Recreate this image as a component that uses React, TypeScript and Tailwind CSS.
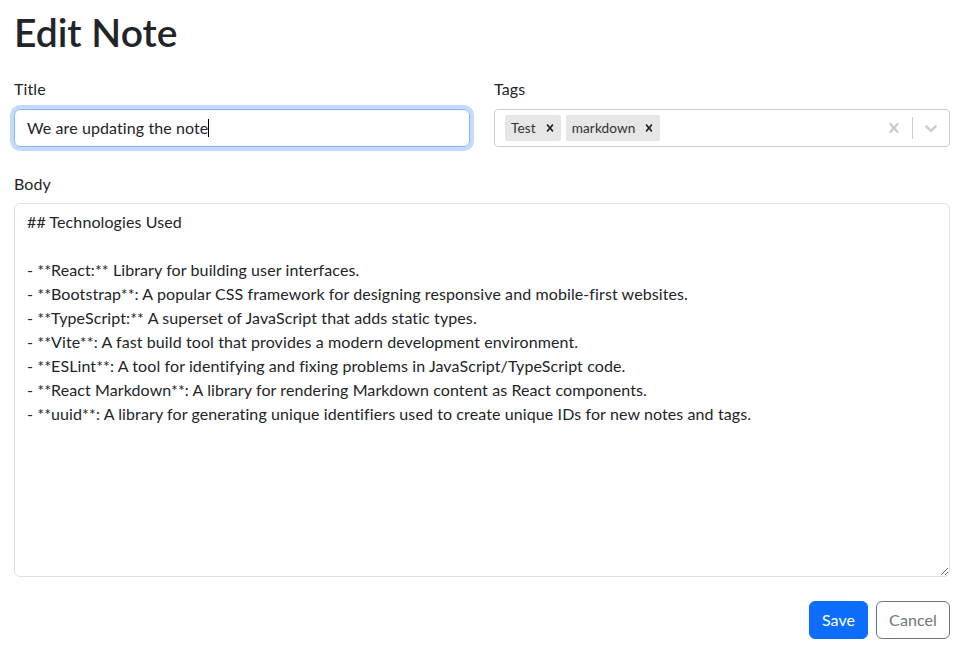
const BODY = `## Technologies Used

- **React:** Library for building user interfaces.
- **Bootstrap**: A popular CSS framework for designing responsive and mobile-first websites.
- **TypeScript:** A superset of JavaScript that adds static types.
- **Vite**: A fast build tool that provides a modern development environment.
- **ESLint**: A tool for identifying and fixing problems in JavaScript/TypeScript code.
- **React Markdown**: A library for rendering Markdown content as React components.
- **uuid**: A library for generating unique identifiers used to create unique IDs for new notes and tags.`

const TAGS = ['Test', 'markdown']

const CROSS =
  'M14.348 14.849c-0.469 0.469-1.229 0.469-1.697 0l-2.651-3.030-2.651 3.029c-0.469 0.469-1.229 0.469-1.697 0-0.469-0.469-0.469-1.229 0-1.697l2.758-3.15-2.759-3.152c-0.469-0.469-0.469-1.228 0-1.697s1.228-0.469 1.697 0l2.652 3.031 2.651-3.031c0.469-0.469 1.228-0.469 1.697 0s0.469 1.229 0 1.697l-2.758 3.152 2.758 3.15c0.469 0.469 0.469 1.229 0 1.698z'

function Chip({ label }: { label: string }) {
  return (
    <div className="flex items-center h-[26px] bg-[#e6e6e6] rounded-[2px] text-[13.6px] text-[#333]">
      <span className="pl-[6px] pr-[3px]">{label}</span>
      <span className="px-[4px] flex items-center">
        <svg viewBox="0 0 20 20" className="w-[14px] h-[14px]" fill="#222">
          <path d={CROSS} />
        </svg>
      </span>
    </div>
  )
}

export default function App() {
  return (
    <div className="pl-[14px] pr-[20px] text-[#212529] font-['Lato',sans-serif] text-base tracking-[0.1px] bg-white min-h-[658px]">
      <h1 className="text-[39px] leading-[48px] font-semibold tracking-normal pt-[8px] mb-[21px]">Edit Note</h1>

      <div className="grid grid-cols-2 gap-x-6">
        <div>
          <div className="leading-6 mb-2">Title</div>
          <div className="h-[38px] border border-[#86b7fe] rounded-[6px] shadow-[0_0_0_4px_rgba(13,110,253,0.25)] px-3 flex items-center">
            <span>We are updating the note</span>
            <span className="w-px h-[18px] bg-black" />
          </div>
        </div>
        <div>
          <div className="leading-6 mb-2">Tags</div>
          <div className="h-[38px] border border-[#ccc] rounded-[4px] flex items-center">
            <div className="flex-1 flex items-center gap-[5px] pl-[10px]">
              {TAGS.map(t => <Chip key={t} label={t} />)}
            </div>
            <div className="flex items-center h-full">
              <div className="px-2 flex items-center">
                <svg viewBox="0 0 20 20" className="w-5 h-5" fill="#ccc">
                  <path d={CROSS} />
                </svg>
              </div>
              <span className="w-px h-[22px] bg-[#ccc]" />
              <div className="px-2 flex items-center">
                <svg viewBox="0 0 20 20" className="w-5 h-5" fill="#ccc">
                  <path d="M4.516 7.548c0.436-0.446 1.043-0.481 1.576 0l3.908 3.747 3.908-3.747c0.533-0.481 1.141-0.446 1.574 0 0.436 0.445 0.408 1.197 0 1.615-0.406 0.418-4.695 4.502-4.695 4.502-0.217 0.223-0.502 0.335-0.787 0.335s-0.57-0.112-0.789-0.335c0 0-4.287-4.084-4.695-4.502s-0.436-1.17 0-1.615z" />
                </svg>
              </div>
            </div>
          </div>
        </div>
      </div>

      <div className="mt-[25px]">
        <div className="leading-6 mb-[7px]">Body</div>
        <textarea
          readOnly
          defaultValue={BODY}
          className="block w-full h-[374px] border border-[#dee2e6] rounded-[6px] px-3 py-[6px] leading-6 text-base tracking-[0.1px] text-[#212529] outline-none"
        />
      </div>

      <div className="flex justify-end gap-2 mt-6">
        <button className="h-[38px] px-3 rounded-[6px] bg-[#0d6efd] text-white border border-[#0d6efd]">Save</button>
        <button className="h-[38px] px-3 rounded-[6px] border border-[#6c757d] text-[#6c757d] bg-white">Cancel</button>
      </div>
    </div>
  )
}
